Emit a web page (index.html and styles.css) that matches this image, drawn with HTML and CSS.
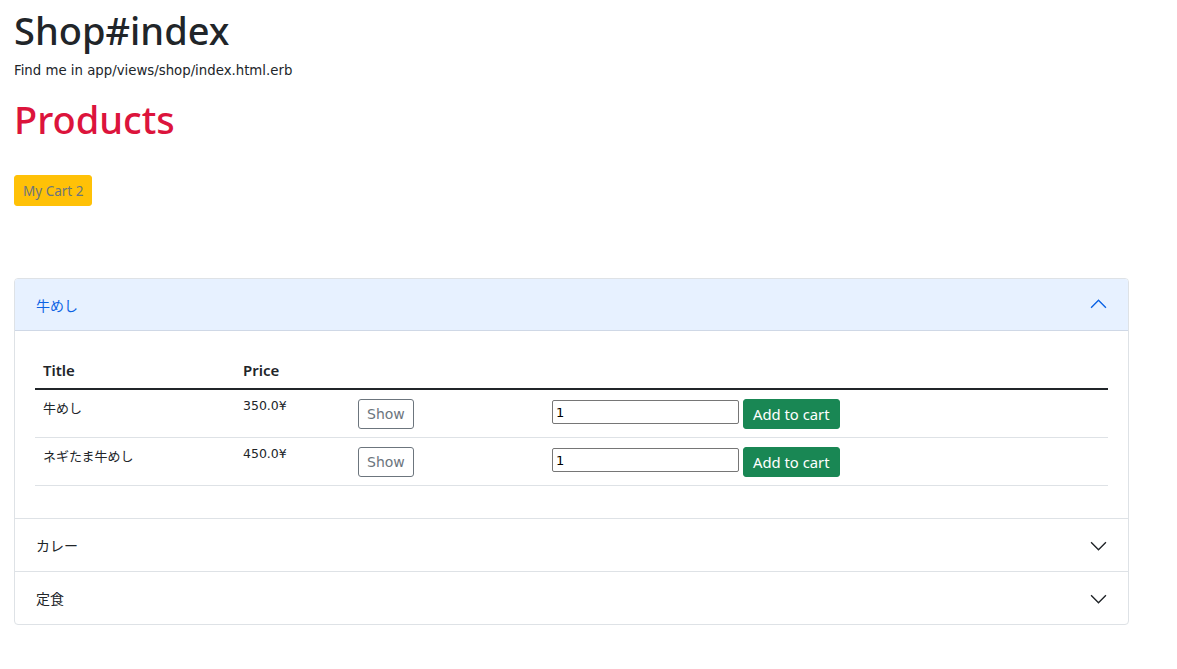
FILE: index.html
```html
<!DOCTYPE html>
<html lang="ja">
<head>
    <meta charset="UTF-8" />
    <title>Shop</title>
    <link rel="stylesheet" href="styles.css">
</head>
<body>
    <div class="page">
        <h1 class="title">Shop#index</h1>
        <p class="hint">Find me in app/views/shop/index.html.erb</p>
        <h1 class="products">Products</h1>
        <button class="btn-cart">My Cart 2</button>

        <div class="accordion">
            <div class="acc-item">
                <div class="acc-head open">
                    <span>牛めし</span>
                    <svg class="chev" width="17" height="17" viewBox="0 0 16 16"><path d="M1 11 L8 4 L15 11" fill="none" stroke="currentColor" stroke-width="1.3"/></svg>
                </div>
                <div class="acc-body">
                    <table class="products-table">
                        <thead>
                            <tr>
                                <th class="c-title">Title</th>
                                <th class="c-price">Price</th>
                                <th class="c-show"></th>
                                <th></th>
                            </tr>
                        </thead>
                        <tbody>
                            <tr>
                                <td>牛めし</td>
                                <td class="num">350.0¥</td>
                                <td><button class="btn-show">Show</button></td>
                                <td><input class="qty" type="text" value="1"><button class="btn-add">Add to cart</button></td>
                            </tr>
                            <tr>
                                <td>ネギたま牛めし</td>
                                <td class="num">450.0¥</td>
                                <td><button class="btn-show">Show</button></td>
                                <td><input class="qty" type="text" value="1"><button class="btn-add">Add to cart</button></td>
                            </tr>
                        </tbody>
                    </table>
                </div>
            </div>
            <div class="acc-item">
                <div class="acc-head">
                    <span>カレー</span>
                    <svg class="chev" width="17" height="17" viewBox="0 0 16 16"><path d="M1 5 L8 12 L15 5" fill="none" stroke="currentColor" stroke-width="1.3"/></svg>
                </div>
            </div>
            <div class="acc-item">
                <div class="acc-head">
                    <span>定食</span>
                    <svg class="chev" width="17" height="17" viewBox="0 0 16 16"><path d="M1 5 L8 12 L15 5" fill="none" stroke="currentColor" stroke-width="1.3"/></svg>
                </div>
            </div>
        </div>
    </div>
</body>
</html>
```

FILE: styles.css
```css
*{
    box-sizing: border-box;
}
body{
    margin: 0;
    font-family: "Noto Sans", "Noto Sans CJK JP", sans-serif;
    color: #212529;
}
.page{
    padding: 8px 14px;
    width: 1143px;
}
.title{
    margin: 0;
    font-size: 38px;
    font-weight: 500;
    line-height: 1.2;
}
.hint{
    margin: 9px 0 0;
    font-family: "DejaVu Sans", "Noto Sans CJK JP", sans-serif;
    font-size: 13.3px;
}
.products{
    margin: 19px 0 0;
    font-size: 38px;
    font-weight: 500;
    line-height: 1.2;
    color: crimson;
}
.btn-cart{
    margin-top: 33px;
    display: block;
    background-color: #ffc107;
    border: 1px solid #ffc107;
    border-radius: 3px;
    color: #6c757d;
    font-family: "Noto Sans", sans-serif;
    font-size: 13.5px;
    padding: 4px 8px;
    height: 31px;
}
.accordion{
    margin-top: 72px;
    border: 1px solid #dee2e6;
    border-radius: 4px;
    overflow: hidden;
}
.acc-item + .acc-item{
    border-top: 1px solid #dee2e6;
}
.acc-head{
    display: flex;
    justify-content: space-between;
    align-items: center;
    height: 52px;
    padding: 0 21px 0 21px;
    font-family: "Noto Sans CJK JP", sans-serif;
    font-size: 14px;
    color: #212529;
}
.acc-head.open{
    background-color: #e7f1ff;
    color: #0c63e4;
    border-bottom: 1px solid #cfd8e6;
}
.chev{
    color: #212529;
}
.acc-head.open .chev{
    color: #0c63e4;
}
.acc-body{
    padding: 20px 20px 32px;
}
.products-table{
    width: 100%;
    border-collapse: collapse;
}
.products-table th{
    text-align: left;
    padding: 8px;
    height: 38px;
    font-size: 15px;
    font-weight: 600;
    border-bottom: 2px solid #212529;
}
.c-title{
    width: 200px;
}
.c-price{
    width: 115px;
}
.c-show{
    width: 194px;
}
.products-table td{
    padding: 8px;
    vertical-align: top;
    border-bottom: 1px solid #dee2e6;
    font-family: "Noto Sans CJK JP", sans-serif;
    font-size: 13px;
    height: 48px;
}
.products-table td.num{
    font-family: "DejaVu Sans", sans-serif;
    font-size: 12.5px;
}
.btn-show{
    margin-top: 1px;
    background: white;
    border: 1px solid #6c757d;
    border-radius: 3px;
    color: #6c757d;
    font-family: "DejaVu Sans", sans-serif;
    font-size: 14px;
    height: 30px;
    padding: 0 8px;
}
.qty{
    width: 187px;
    height: 24px;
    margin-top: 2px;
    border: 1px solid #767676;
    border-radius: 2px;
    padding: 1px 3px;
    font-family: "DejaVu Sans", sans-serif;
    font-size: 13px;
    vertical-align: top;
}
.btn-add{
    margin-left: 4px;
    margin-top: 1px;
    background-color: #198754;
    border: 1px solid #198754;
    border-radius: 3px;
    color: white;
    font-family: "Noto Sans", sans-serif;
    font-size: 14.8px;
    height: 30px;
    padding: 0 9px;
    vertical-align: top;
}
```
